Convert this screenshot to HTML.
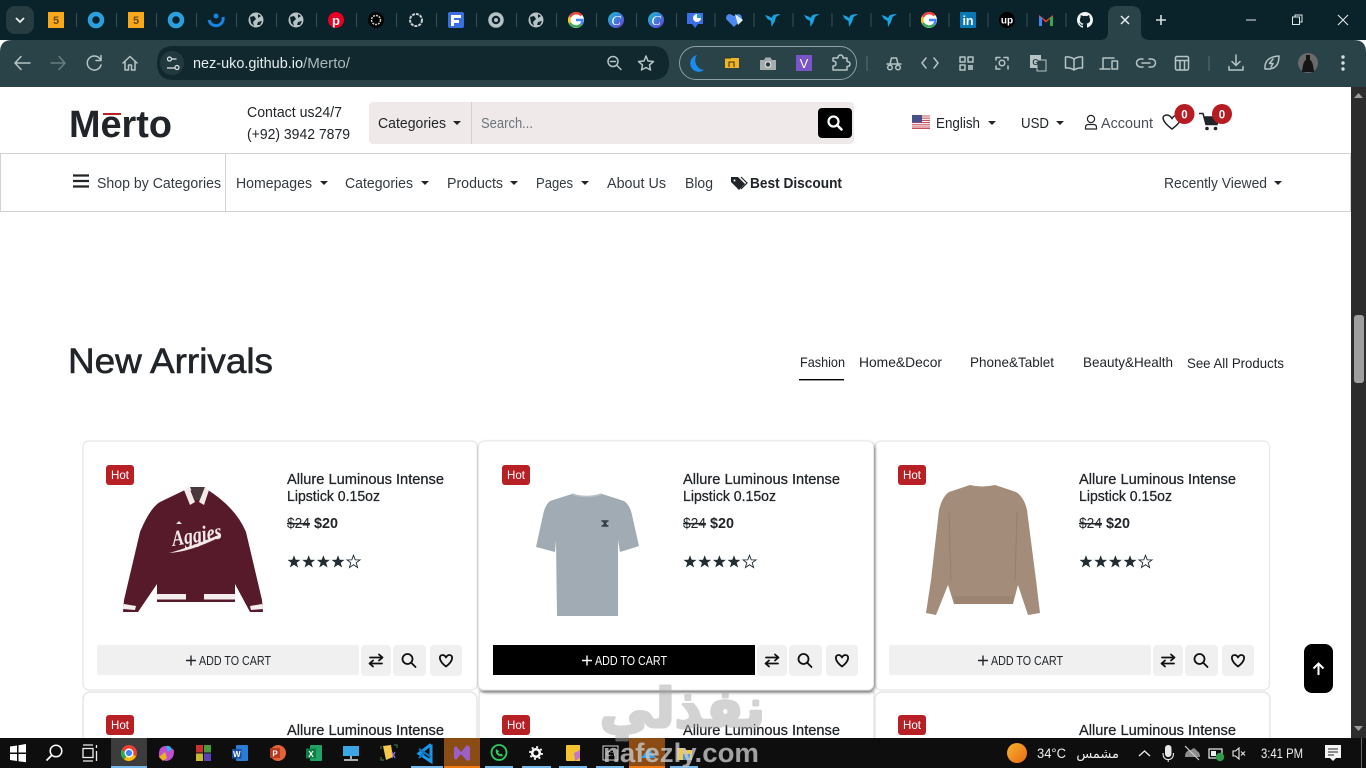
<!DOCTYPE html>
<html lang="en"><head><meta charset="utf-8"><title>Merto</title>
<style>
html,body{margin:0;padding:0;width:1366px;height:768px;overflow:hidden;background:#fff}
svg{display:block;font-family:"Liberation Sans","DejaVu Sans",sans-serif}
.s{fill:none;stroke:#b6c4c4;stroke-width:1.5;stroke-linecap:round;stroke-linejoin:round}
.d{fill:#212529;font-size:15px}
.m{fill:#212529;font-size:14.5px;stroke:#212529;stroke-width:.25}
.b{fill:#212529;font-size:15px;font-weight:bold}
.h{fill:#fff;font-size:12px;text-anchor:middle}
.i{fill:none;stroke:#111;stroke-width:1.8;stroke-linecap:round;stroke-linejoin:round}
.star{fill:#212d33}
</style></head><body>
<svg width="1366" height="768" viewBox="0 0 1366 768" xmlns="http://www.w3.org/2000/svg">
<defs>
<filter id="sh" x="-5%" y="-5%" width="110%" height="112%"><feDropShadow dx="1" dy="2" stdDeviation="1.600" flood-color="#000" flood-opacity=".5"/></filter>
<linearGradient id="wx" x1="0" y1="0" x2="1" y2="1"><stop offset="0" stop-color="#f8b32c"/><stop offset="1" stop-color="#ea6a12"/></linearGradient>
<linearGradient id="cv" x1="0" y1="0" x2="1" y2="1"><stop offset="0" stop-color="#18c1d6"/><stop offset="1" stop-color="#6a3ad6"/></linearGradient>
<g id="globe"><circle r="7.500" fill="#b6c2c4"/><path d="M-6 -3 L-2 -4 L0 -1 L-3 2 L-2 6 L-5 3Z M2 -6 L5 -4 L2 -2Z M2 2 L6 1 L4 5 L1 5Z" fill="#0b2329"/></g>
<g id="bird"><path d="M-7.500 -5 Q-3 -4 -1 -2 L1 -5 Q4 -6 8 -6 L3.500 -3 L2 2 L-1 7 L-1.500 1 L-5 -1Z" fill="#1ba3e0"/></g>
<g id="cva"><circle r="8" fill="url(#cv)"/><text x="0" y="5" text-anchor="middle" font-size="14" font-style="italic" font-family="Liberation Serif" fill="#fff">C</text></g>
<g id="goo"><circle r="8" fill="#fff"/><path d="M5.500 -4.500 A7 7 0 0 0 -6 -3" fill="none" stroke="#ea4335" stroke-width="2.400"/><path d="M-6 -3 A7 7 0 0 0 -6 3" fill="none" stroke="#fbbc05" stroke-width="2.400"/><path d="M-6 3 A7 7 0 0 0 5 4.500" fill="none" stroke="#34a853" stroke-width="2.400"/><path d="M5 4.500 A7 7 0 0 0 6.500 0 L0 0" fill="none" stroke="#4285f4" stroke-width="2.400"/></g>
<g id="swap"><path class="i" d="M-6 -3 H6 M3 -6 L6.500 -3 L3 0 M6 3 H-6 M-3 0 L-6.500 3 L-3 6" stroke-width="2"/></g>
<g id="mag"><circle cx="-1.500" cy="-1.500" r="5" class="i" stroke-width="2"/><path class="i" d="M2.500 2.500 L6.500 6.500" stroke-width="2.200"/></g>
<g id="hrt"><path class="i" d="M0 6 C-8 0 -7 -5.500 -3.500 -5.500 C-1.500 -5.500 -.5 -4 0 -3 C.5 -4 1.500 -5.500 3.500 -5.500 C7 -5.500 8 0 0 6Z" stroke-width="1.500"/></g>
<g id="st"><path class="star" d="M0 -6.800 L1.700 -2.200 L6.500 -2.100 L2.700 .8 L4.100 5.500 L0 2.700 L-4.100 5.500 L-2.700 .8 L-6.500 -2.100 L-1.700 -2.200Z"/></g>
<g id="stars"><use href="#st" x="294"/><use href="#st" x="308.700"/><use href="#st" x="323.400"/><use href="#st" x="338"/><path transform="translate(353.500,0)" fill="none" stroke="#212d33" stroke-width=".9" d="M0 -6.800 L1.700 -2.200 L6.500 -2.100 L2.700 .8 L4.100 5.500 L0 2.700 L-4.100 5.500 L-2.700 .8 L-6.500 -2.100 L-1.700 -2.200Z"/></g>
</defs>

<!-- page -->
<rect width="1366" height="768" fill="#fff"/>

<!-- cards row 2 -->
<path d="M83 740 V700 Q83 692 91 692 H469 Q477 692 477 700 V740" fill="#fff" stroke="#e6e6e6" stroke-width="1.500"/>
<path d="M479 740 V692 H874 V740" fill="#fff" stroke="#e6e6e6" stroke-width="1.500"/>
<path d="M875 740 V700 Q875 692 883 692 H1262 Q1270 692 1270 700 V740" fill="#fff" stroke="#e6e6e6" stroke-width="1.500"/>

<!-- card 1 -->
<rect x="83" y="441" width="394.500" height="249" rx="6" fill="#fff" stroke="#e6e6e6" stroke-width="1.200"/>
<!-- card 3 -->
<rect x="875" y="441" width="394.500" height="249" rx="6" fill="#fff" stroke="#e6e6e6" stroke-width="1.200"/>
<!-- card 2 hover -->
<rect x="478.500" y="441" width="395" height="249" rx="6" fill="#fff" stroke="#e8e8e8" stroke-width="1" filter="url(#sh)"/>

<!-- product: jacket -->
<path d="M187 489 L160 502 Q150 508 140 532 L124 600 L123 612 L138 612 L157 584 L157 602 L235 602 L235 584 L250 612 L263 612 L262 600 L246 532 Q236 508 208 490 Q197 494 187 489Z" fill="#571a2b"/>
<path d="M190 487 H205 L200 500 H195Z" fill="#4a3a40"/>
<path d="M184 490 L189 487 L195 502 L190 505Z M209 490 L205 487 L199 502 L204 505Z" fill="#f3e9e9"/>
<rect x="157" y="594" width="29" height="5.500" fill="#f6eeee"/><rect x="204" y="594" width="31" height="5.500" fill="#f6eeee"/>
<path d="M124 604 L136 606 L135 610 L123 609Z M250 606 L262 604 L263 609 L251 610Z" fill="#f6eeee"/>
<text x="173" y="546" font-family="Liberation Serif" font-size="22" font-style="italic" font-weight="bold" fill="#f3e8ea" transform="rotate(-9 173 546)" textLength="50" lengthAdjust="spacingAndGlyphs">Aggies</text>
<path d="M169 553 Q188 548 221 534 L220 537 Q190 552 169 553Z" fill="#f3e8ea"/>
<path d="M176 524 L179 521 L182 524Z" fill="#e8dcdc"/>

<!-- product: t-shirt -->
<path d="M572 494 Q586 499 602 494 L624 501 Q630 505 632 515 L639 546 L620 552 L618 540 L618 616 L557 616 L556 540 L555 552 L536 547 L543 515 Q545 505 550 501Z" fill="#a0abb3"/>
<path d="M572 494 Q586 499 602 494" fill="none" stroke="#b8c0c7" stroke-width="1.500"/>
<path d="M601.500 521 L608.500 521 M601.500 526 L608.500 526 M603 521 L607 526 M607 521 L603 526" stroke="#333b42" stroke-width="1.500"/>

<!-- product: sweater -->
<path d="M970 485 Q982 488 995 485 L1016 492 Q1024 497 1027 510 L1036 580 L1040 613 L1028 615 L1018 585 L1013 604 L954 604 L948 585 L936 615 L926 613 L931 580 L939 510 Q942 497 949 492Z" fill="#a38c79"/>
<path d="M949 512 L951 580 M1017 512 L1015 580" stroke="#94806e" stroke-width="1" fill="none"/>
<rect x="954" y="596" width="59" height="8" fill="#9b8572"/>

<!-- hot badges -->
<rect x="106" y="465" width="28" height="20" rx="3" fill="#b72126"/><text class="h" x="120" y="479" textLength="18" lengthAdjust="spacingAndGlyphs">Hot</text>
<rect x="502" y="465" width="28" height="20" rx="3" fill="#b72126"/><text class="h" x="516" y="479" textLength="18" lengthAdjust="spacingAndGlyphs">Hot</text>
<rect x="898" y="465" width="28" height="20" rx="3" fill="#b72126"/><text class="h" x="912" y="479" textLength="18" lengthAdjust="spacingAndGlyphs">Hot</text>
<rect x="106" y="715" width="28" height="20" rx="3" fill="#b72126"/><text class="h" x="120" y="729" textLength="18" lengthAdjust="spacingAndGlyphs">Hot</text>
<rect x="502" y="715" width="28" height="20" rx="3" fill="#b72126"/><text class="h" x="516" y="729" textLength="18" lengthAdjust="spacingAndGlyphs">Hot</text>
<rect x="898" y="715" width="28" height="20" rx="3" fill="#b72126"/><text class="h" x="912" y="729" textLength="18" lengthAdjust="spacingAndGlyphs">Hot</text>

<!-- card text 1 -->
<text class="m" x="287" y="484" textLength="157" lengthAdjust="spacingAndGlyphs">Allure Luminous Intense</text>
<text class="m" x="287" y="501" textLength="93" lengthAdjust="spacingAndGlyphs">Lipstick 0.15oz</text>
<text class="d" x="287" y="528" font-size="14" textLength="23" lengthAdjust="spacingAndGlyphs" text-decoration="line-through">$24</text>
<text class="b" x="314" y="528" textLength="24" lengthAdjust="spacingAndGlyphs">$20</text>
<use href="#stars" y="562"/>
<!-- card text 2 -->
<text class="m" x="683" y="484" textLength="157" lengthAdjust="spacingAndGlyphs">Allure Luminous Intense</text>
<text class="m" x="683" y="501" textLength="93" lengthAdjust="spacingAndGlyphs">Lipstick 0.15oz</text>
<text class="d" x="683" y="528" font-size="14" textLength="23" lengthAdjust="spacingAndGlyphs" text-decoration="line-through">$24</text>
<text class="b" x="710" y="528" textLength="24" lengthAdjust="spacingAndGlyphs">$20</text>
<use href="#stars" x="396" y="562"/>
<!-- card text 3 -->
<text class="m" x="1079" y="484" textLength="157" lengthAdjust="spacingAndGlyphs">Allure Luminous Intense</text>
<text class="m" x="1079" y="501" textLength="93" lengthAdjust="spacingAndGlyphs">Lipstick 0.15oz</text>
<text class="d" x="1079" y="528" font-size="14" textLength="23" lengthAdjust="spacingAndGlyphs" text-decoration="line-through">$24</text>
<text class="b" x="1106" y="528" textLength="24" lengthAdjust="spacingAndGlyphs">$20</text>
<use href="#stars" x="792" y="562"/>
<!-- row 2 titles -->
<text class="m" x="287" y="735" textLength="157" lengthAdjust="spacingAndGlyphs">Allure Luminous Intense</text>
<text class="m" x="683" y="735" textLength="157" lengthAdjust="spacingAndGlyphs">Allure Luminous Intense</text>
<text class="m" x="1079" y="735" textLength="157" lengthAdjust="spacingAndGlyphs">Allure Luminous Intense</text>

<!-- buttons card 1 -->
<rect x="97" y="645" width="262" height="30" rx="2" fill="#f0f0f0"/>
<path d="M186 660.500 H196 M191 655.500 V665.500" stroke="#212529" stroke-width="1.400"/>
<text x="199" y="665" font-size="13" fill="#212529" textLength="72" lengthAdjust="spacingAndGlyphs">ADD TO CART</text>
<rect x="361" y="645" width="30" height="31" rx="4" fill="#f0f0f0"/><rect x="393" y="645" width="33" height="31" rx="4" fill="#f0f0f0"/><rect x="430" y="645" width="32" height="31" rx="4" fill="#f0f0f0"/>
<use href="#swap" x="376" y="660.500"/><use href="#mag" x="409" y="660.500"/><use href="#hrt" x="446" y="660.500"/>
<!-- buttons card 2 -->
<rect x="493" y="645" width="262" height="30" fill="#000"/>
<path d="M582 660.500 H592 M587 655.500 V665.500" stroke="#fff" stroke-width="1.400"/>
<text x="595" y="665" font-size="13" fill="#fff" textLength="72" lengthAdjust="spacingAndGlyphs">ADD TO CART</text>
<rect x="757" y="645" width="30" height="31" rx="4" fill="#f0f0f0"/><rect x="789" y="645" width="33" height="31" rx="4" fill="#f0f0f0"/><rect x="826" y="645" width="32" height="31" rx="4" fill="#f0f0f0"/>
<use href="#swap" x="772" y="660.500"/><use href="#mag" x="805" y="660.500"/><use href="#hrt" x="842" y="660.500"/>
<!-- buttons card 3 -->
<rect x="889" y="645" width="262" height="30" rx="2" fill="#f0f0f0"/>
<path d="M978 660.500 H988 M983 655.500 V665.500" stroke="#212529" stroke-width="1.400"/>
<text x="991" y="665" font-size="13" fill="#212529" textLength="72" lengthAdjust="spacingAndGlyphs">ADD TO CART</text>
<rect x="1153" y="645" width="30" height="31" rx="4" fill="#f0f0f0"/><rect x="1185" y="645" width="33" height="31" rx="4" fill="#f0f0f0"/><rect x="1222" y="645" width="32" height="31" rx="4" fill="#f0f0f0"/>
<use href="#swap" x="1168" y="660.500"/><use href="#mag" x="1201" y="660.500"/><use href="#hrt" x="1238" y="660.500"/>

<!-- heading -->
<text x="68" y="373" font-size="35" fill="#212529" stroke="#212529" stroke-width=".6" textLength="205" lengthAdjust="spacingAndGlyphs">New Arrivals</text>
<text x="800" y="367" font-size="14" fill="#212529" textLength="45" lengthAdjust="spacingAndGlyphs">Fashion</text>
<rect x="799" y="379" width="45" height="1.400" fill="#000"/>
<text x="859" y="367" font-size="14" fill="#212529" textLength="83" lengthAdjust="spacingAndGlyphs">Home&amp;Decor</text>
<text x="970" y="367" font-size="14" fill="#212529" textLength="84" lengthAdjust="spacingAndGlyphs">Phone&amp;Tablet</text>
<text x="1083" y="367" font-size="14" fill="#212529" textLength="90" lengthAdjust="spacingAndGlyphs">Beauty&amp;Health</text>
<text x="1187" y="368" font-size="14" fill="#212529" textLength="97" lengthAdjust="spacingAndGlyphs">See All Products</text>

<!-- back to top -->
<rect x="1304" y="644" width="29" height="49" rx="8" fill="#000"/>
<path d="M1318.500 675 V664 M1313.500 668.500 L1318.500 663.500 L1323.500 668.500" fill="none" stroke="#fff" stroke-width="2"/>

<!-- header -->
<rect x="0" y="87" width="1351" height="125" fill="#fff"/>
<text x="69" y="137" font-size="38" font-weight="bold" fill="#212529" textLength="103" lengthAdjust="spacingAndGlyphs">Merto</text>
<rect x="103" y="113" width="18" height="2" fill="#b72126"/>
<text class="d" x="247" y="117" font-size="14.500" textLength="95" lengthAdjust="spacingAndGlyphs">Contact us24/7</text>
<text class="d" x="247" y="139" font-size="14.500" textLength="103" lengthAdjust="spacingAndGlyphs">(+92) 3942 7879</text>
<rect x="369" y="102" width="485" height="42" rx="4" fill="#f0e9e9"/>
<rect x="471" y="102" width="1" height="42" fill="#d5d0d0"/>
<text class="d" x="378" y="128" font-size="14.500" textLength="68" lengthAdjust="spacingAndGlyphs">Categories</text>
<path d="M453 121 H461 L457 125Z" fill="#212529"/>
<text x="481" y="128" font-size="14.500" fill="#6c757d" textLength="52" lengthAdjust="spacingAndGlyphs">Search...</text>
<rect x="818" y="108" width="34" height="30" rx="4" fill="#000"/>
<circle cx="833.500" cy="121.500" r="5" fill="none" stroke="#fff" stroke-width="2.200"/><path d="M837 125 L841.500 129.500" stroke="#fff" stroke-width="2.500" stroke-linecap="round"/>

<!-- flag -->
<rect x="912" y="115" width="18" height="14" fill="#fff"/>
<path d="M912 116 H930 M912 118.200 H930 M912 120.400 H930 M912 122.600 H930 M912 124.800 H930 M912 127 H930 M912 128.500 H930" stroke="#c9505a" stroke-width="1.100"/>
<rect x="912" y="115" width="10" height="7.500" fill="#47508a"/>
<text class="d" x="936" y="128" font-size="14.500" textLength="44" lengthAdjust="spacingAndGlyphs">English</text>
<path d="M988 121 H996 L992 125Z" fill="#212529"/>
<text class="d" x="1021" y="128" font-size="14.500" textLength="28" lengthAdjust="spacingAndGlyphs">USD</text>
<path d="M1056 121 H1064 L1060 125Z" fill="#212529"/>
<circle cx="1091" cy="119" r="3.600" fill="none" stroke="#212529" stroke-width="1.200"/>
<path d="M1085.500 129 V127.500 Q1085.500 124.500 1088.500 124.500 H1093.500 Q1096.500 124.500 1096.500 127.500 V129Z" fill="none" stroke="#212529" stroke-width="1.200"/>
<text x="1101" y="128" font-size="14.500" fill="#495057" textLength="52" lengthAdjust="spacingAndGlyphs">Account</text>
<path d="M1172 129 C1160 120 1162 115 1167 115 C1169.500 115 1171 117 1172 118.500 C1173 117 1174.500 115 1177 115 C1182 115 1184 120 1172 129Z" fill="none" stroke="#212529" stroke-width="1.500"/>
<circle cx="1184.500" cy="114" r="10" fill="#b71c24"/>
<text x="1184.500" y="118.500" font-size="11.500" font-weight="bold" fill="#fff" text-anchor="middle">0</text>
<path d="M1199 113.500 H1203 L1206 124.500 H1217 L1219 117 H1204.500" fill="none" stroke="#212529" stroke-width="1.500"/><path d="M1204 117 H1219 L1217 125 H1206Z" fill="#212529"/><circle cx="1207" cy="128.500" r="1.800" fill="#212529"/><circle cx="1215.500" cy="128.500" r="1.800" fill="#212529"/>
<circle cx="1222" cy="114" r="10" fill="#b71c24"/>
<text x="1222" y="118.500" font-size="11.500" font-weight="bold" fill="#fff" text-anchor="middle">0</text>

<!-- nav -->
<rect x="0" y="153" width="1351" height="1" fill="#d2d2d2"/>
<rect x="0" y="211" width="1351" height="1" fill="#d2d2d2"/>
<rect x="0" y="153" width="1" height="59" fill="#d2d2d2"/>
<rect x="225" y="153" width="1" height="59" fill="#d2d2d2"/>
<rect x="1350" y="153" width="1" height="59" fill="#d2d2d2"/>
<path d="M73 175.500 H89 M73 181 H89 M73 186.500 H89" stroke="#212529" stroke-width="2.200"/>
<text x="97" y="188" font-size="14.500" fill="#343a40" textLength="124" lengthAdjust="spacingAndGlyphs">Shop by Categories</text>
<text x="236" y="188" font-size="14.500" fill="#343a40" textLength="76" lengthAdjust="spacingAndGlyphs">Homepages</text><path d="M320 181 H328 L324 185Z" fill="#212529"/>
<text x="345" y="188" font-size="14.500" fill="#343a40" textLength="68" lengthAdjust="spacingAndGlyphs">Categories</text><path d="M421 181 H429 L425 185Z" fill="#212529"/>
<text x="447" y="188" font-size="14.500" fill="#343a40" textLength="56" lengthAdjust="spacingAndGlyphs">Products</text><path d="M510 181 H518 L514 185Z" fill="#212529"/>
<text x="536" y="188" font-size="14.500" fill="#343a40" textLength="37" lengthAdjust="spacingAndGlyphs">Pages</text><path d="M581 181 H589 L585 185Z" fill="#212529"/>
<text x="607" y="188" font-size="14.500" fill="#343a40" textLength="59" lengthAdjust="spacingAndGlyphs">About Us</text>
<text x="685" y="188" font-size="14.500" fill="#343a40" textLength="28" lengthAdjust="spacingAndGlyphs">Blog</text>
<path d="M731 177 H738 L745 184 L739 190 L731 182Z" fill="#212529"/><path d="M741 177 L747 183 L741 189" fill="none" stroke="#212529" stroke-width="1.200"/><circle cx="734.500" cy="180.500" r="1" fill="#fff"/>
<text x="750" y="188" font-size="14.500" font-weight="bold" fill="#212529" textLength="92" lengthAdjust="spacingAndGlyphs">Best Discount</text>
<text x="1164" y="188" font-size="14.500" fill="#343a40" textLength="103" lengthAdjust="spacingAndGlyphs">Recently Viewed</text><path d="M1274 181 H1282 L1278 185Z" fill="#212529"/>

<!-- scrollbar -->
<rect x="1351" y="87" width="15" height="651" fill="#2c2c2c"/>
<path d="M1354 98 L1358.500 93 L1363 98Z" fill="#9c9c9c"/>
<path d="M1354 726 L1358.500 731 L1363 726Z" fill="#9c9c9c"/>
<rect x="1354" y="315" width="10" height="68" rx="3" fill="#9f9f9f"/>

<!-- chrome tab strip -->
<rect x="0" y="0" width="1366" height="40" fill="#0a2229"/>
<rect x="6" y="6" width="28" height="28" rx="9" fill="#263c41"/>
<path d="M16 18 L20 22 L24 18" fill="none" stroke="#e6eeee" stroke-width="1.800"/>
<g stroke="#33494f" stroke-width="1.200">
<path d="M76.500 13 V27 M116.500 13 V27 M156.500 13 V27 M196.500 13 V27 M236.500 13 V27 M276.500 13 V27 M316.500 13 V27 M356.500 13 V27 M396.500 13 V27 M436.500 13 V27 M476.500 13 V27 M516.500 13 V27 M556.500 13 V27 M596.500 13 V27 M636.500 13 V27 M676.500 13 V27 M715 13 V27 M754 13 V27 M793 13 V27 M832 13 V27 M871 13 V27 M910 13 V27 M949 13 V27 M988 13 V27 M1027 13 V27 M1066 13 V27"/></g>
<rect x="48" y="12" width="16" height="16" fill="#f5a81c"/><text x="56" y="24" font-size="11" font-weight="bold" fill="#6b4a08" text-anchor="middle">5</text>
<circle cx="96" cy="20" r="6" fill="#0a2229" stroke="#2ba0dc" stroke-width="4.500"/>
<rect x="128" y="12" width="16" height="16" fill="#f5a81c"/><text x="136" y="24" font-size="11" font-weight="bold" fill="#6b4a08" text-anchor="middle">5</text>
<circle cx="176" cy="20" r="6" fill="#0a2229" stroke="#2ba0dc" stroke-width="4.500"/>
<path d="M209 20 A7 7 0 0 0 223 17" fill="none" stroke="#1a84e0" stroke-width="3"/><circle cx="216" cy="16" r="2.500" fill="#1a84e0"/>
<use href="#globe" x="256" y="20"/><use href="#globe" x="296" y="20"/>
<circle cx="336" cy="20" r="8" fill="#e60023"/><text x="336" y="25" font-size="13" font-weight="bold" fill="#fff" text-anchor="middle">p</text>
<circle cx="376" cy="20" r="8" fill="#000"/><circle cx="376" cy="20" r="4.500" fill="none" stroke="#ccc" stroke-width="1.500" stroke-dasharray="2 1"/>
<circle cx="416" cy="20" r="6" fill="none" stroke="#c9d3d3" stroke-width="2" stroke-dasharray="3 1"/>
<rect x="448" y="12" width="16" height="16" rx="2" fill="#3a6fe0"/><path d="M451 15 H461 V18 H454 V20 H459 V23 H454 V26 H451Z" fill="#fff"/>
<circle cx="496" cy="20" r="6" fill="none" stroke="#b6c2c4" stroke-width="3.500"/><circle cx="496" cy="20" r="2" fill="#b6c2c4"/>
<use href="#globe" x="536" y="20"/><use href="#goo" x="576" y="20"/>
<use href="#cva" x="616" y="20"/><use href="#cva" x="656" y="20"/>
<path d="M687 13 H703 V24 H698 L695 28 L692 24 H687Z" fill="#3a6fe8"/><circle cx="697" cy="18" r="4" fill="#fff"/><path d="M697 18 V14 A4 4 0 0 1 701 18Z" fill="#1ba3c0"/>
<path d="M734 27 L726 19 Q726 14 730 14 L734 16 L738 14 Q742 14 742 19Z" fill="#4a8af0"/><path d="M735 14 L743 20 L738 25 Z" fill="#e6eeff"/>
<use href="#bird" x="772.500" y="20"/><use href="#bird" x="811.500" y="20"/><use href="#bird" x="850" y="20"/><use href="#bird" x="889" y="20"/>
<use href="#goo" x="929" y="20"/>
<rect x="960" y="12" width="16" height="16" rx="1" fill="#0a78b5"/><text x="968" y="25" font-size="12.500" font-weight="bold" fill="#fff" text-anchor="middle">in</text>
<circle cx="1007" cy="20" r="8" fill="#000"/><text x="1007" y="23.500" font-size="10" fill="#fff" text-anchor="middle" font-weight="bold">up</text>
<path d="M1039 26 V15 L1046 20.500 L1053 15 V26 H1050 V19 L1046 22.500 L1042 19 V26Z" fill="#ea4335"/><rect x="1039" y="17" width="3" height="9" fill="#4285f4"/><rect x="1050" y="17" width="3" height="9" fill="#34a853"/>
<path transform="translate(1077,12)" fill="#f2f5f5" d="M8 0C3.58 0 0 3.58 0 8c0 3.54 2.29 6.53 5.47 7.59.4.07.55-.17.55-.38 0-.19-.01-.82-.01-1.49-2.01.37-2.53-.49-2.69-.94-.09-.23-.48-.94-.82-1.13-.28-.15-.68-.52-.01-.53.63-.01 1.08.58 1.23.82.72 1.21 1.87.87 2.33.66.07-.52.28-.87.51-1.07-1.78-.2-3.64-.89-3.64-3.95 0-.87.31-1.59.82-2.15-.08-.2-.36-1.02.08-2.12 0 0 .67-.21 2.2.82.64-.18 1.32-.27 2-.27.68 0 1.36.09 2 .27 1.53-1.04 2.2-.82 2.2-.82.44 1.1.16 1.92.08 2.12.51.56.82 1.27.82 2.15 0 3.07-1.87 3.75-3.65 3.95.29.25.54.73.54 1.48 0 1.07-.01 1.93-.01 2.2 0 .21.15.46.55.38A8.013 8.013 0 0016 8c0-4.42-3.58-8-8-8z"/>
<!-- active tab -->
<path d="M1100 40 Q1108 40 1108 32 V15 Q1108 6 1117 6 H1131 Q1141 6 1141 15 V32 Q1141 40 1150 40Z" fill="#2a4348"/>
<path d="M1121 16 L1129 24 M1129 16 L1121 24" stroke="#e6eeee" stroke-width="1.500"/>
<path d="M1161 15 V25 M1156 20 H1166" stroke="#d6e0e0" stroke-width="1.600"/>
<path d="M1246 20 H1256" stroke="#e0e8e8" stroke-width="1"/>
<rect x="1292.500" y="17" width="7" height="7.500" fill="none" stroke="#e0e8e8" stroke-width="1"/><path d="M1295 17 V15 H1302 V22 H1299.500" fill="none" stroke="#e0e8e8" stroke-width="1"/>
<path d="M1338 15 L1348 25 M1348 15 L1338 25" stroke="#e0e8e8" stroke-width="1.100"/>

<!-- toolbar -->
<path d="M0 87 V52 Q0 40 12 40 H1354 Q1366 40 1366 52 V87Z" fill="#2a4348"/>
<path d="M30 63 H15 M21 56.500 L15 63 L21 69.500" class="s"/>
<path d="M51 63 H65 M59 56.500 L65 63 L59 69.500" class="s" opacity=".45"/>
<path d="M100 59 A7 7 0 1 0 101 65 M101 55.500 V60.500 H96" class="s"/>
<path d="M123 63 L130 56.500 L137 63 M125 61.500 V70 H128.500 V65 H131.500 V70 H135 V61.500" class="s"/>
<path d="M173 46 H652 Q669 46 669 63 Q669 80 652 80 H173 Q157 80 157 63 Q157 46 173 46Z" fill="#10282e"/>
<circle cx="172" cy="63" r="12" fill="#223a3f"/>
<path d="M168 59 H176.500 M175 68 H167" stroke="#dde6e6" stroke-width="1.300"/><circle cx="169.500" cy="59" r="2" fill="#223a3f" stroke="#dde6e6" stroke-width="1.200"/><circle cx="177" cy="67.500" r="2" fill="#223a3f" stroke="#dde6e6" stroke-width="1.200"/>
<text x="193" y="68" font-size="14.500" fill="#e8eeee" textLength="110" lengthAdjust="spacingAndGlyphs">nez-uko.github.io</text>
<text x="303" y="68" font-size="14.500" fill="#aab8b8" textLength="47" lengthAdjust="spacingAndGlyphs">/Merto/</text>
<circle cx="613" cy="61.500" r="5" class="s" stroke-width="1.400"/><path d="M610.500 61.500 H615.500 M617 65.500 L621 69.500" class="s" stroke-width="1.400"/>
<path d="M646 56 L648 61 L653.500 61.500 L649.500 65 L650.500 70 L646 67.500 L641.500 70 L642.500 65 L638.500 61.500 L644 61Z" class="s" stroke-width="1.400"/>
<rect x="679.500" y="46.500" width="177" height="33" rx="16.500" fill="none" stroke="#8ea0a3" stroke-width="1"/>
<path d="M697 55 A8.500 8.500 0 1 0 704 70 A9.500 9.500 0 0 1 697 55Z" fill="#1a8cf0"/>
<rect x="725" y="58" width="14" height="10" fill="#f0b429"/><path d="M725 58 H731 M729 67 V62 H734 V67" stroke="#3a2c0a" stroke-width="1" fill="none"/>
<path d="M760 60 H764 L765.500 57.500 H770.500 L772 60 H776 V70 H760Z" fill="#a5adae"/><circle cx="768" cy="64.500" r="2.800" fill="#2a4348" stroke="#eee" stroke-width="1"/>
<rect x="796" y="55" width="16" height="16" fill="#7a55c8"/><text x="804" y="68" font-size="13" fill="#fff" text-anchor="middle">V</text>
<path d="M833 58 H838 Q838 55 840.500 55 Q843 55 843 58 H847 V61.500 Q850 61.500 850 64 Q850 66.500 847 66.500 V70 H833 V66 Q836 66 836 63.500 Q836 61 833 61Z" class="s" stroke-width="1.400"/>
<path d="M867 56 V71" stroke="#5a6e72" stroke-width="1"/>
<path d="M887 64 H901 M890 64 L891.500 58 H896.500 L898 64" class="s" stroke-width="1.400"/><circle cx="890" cy="67.500" r="2.300" class="s" stroke-width="1.200"/><circle cx="898" cy="67.500" r="2.300" class="s" stroke-width="1.200"/>
<path d="M926 58 L922 63 L926 68 M934 58 L938 63 L934 68" class="s"/>
<path d="M960 57 h5 v5 h-5Z M968 57 h5 v5 h-5Z M960 65 h5 v5 h-5Z" class="s" stroke-width="1.300"/><path d="M968 65 h5 v5 h-5Z" fill="#a0b0b0"/>
<path d="M996 60 V57.500 H1000 M1004 57.500 H1008 V60 M996 66 V69 H1000 M1008 66 V69" class="s"/><circle cx="1002" cy="63" r="2.800" class="s"/>
<rect x="1030" y="55" width="11" height="13" fill="#b7c4c4"/><rect x="1037" y="60" width="9" height="11" fill="#2a4348" stroke="#b7c4c4"/><text x="1035.500" y="65" font-size="8" fill="#2a4348" text-anchor="middle" font-weight="bold">G</text>
<path d="M1074 59 Q1070 56.500 1065.500 57 V68 Q1070 67.500 1074 70 Q1078 67.500 1082.500 68 V57 Q1078 56.500 1074 59Z M1074 59 V70" class="s" stroke-width="1.300"/>
<path d="M1103 68 V58 H1114 M1100 69 H1110" class="s" stroke-width="1.400"/><rect x="1112" y="61" width="5.500" height="8" class="s" stroke-width="1.400"/>
<path d="M1143 59 H1140.500 A3.800 3.800 0 0 0 1140.500 67 H1143 M1149 59 H1151.500 A3.800 3.800 0 0 1 1151.500 67 H1149 M1142 63 H1150" class="s" stroke-width="1.400"/>
<rect x="1175.500" y="56.500" width="13" height="13.500" rx="1.500" class="s" stroke-width="1.400"/><path d="M1175.500 60.500 H1188.500 M1180 60.500 V70 M1184.500 60.500 V70" class="s" stroke-width="1.300"/>
<path d="M1209 56 V71" stroke="#5a6e72" stroke-width="1"/>
<path d="M1236 55 V65 M1232 61.500 L1236 65.500 L1240 61.500 M1229 66.500 V70 H1243 V66.500" class="s" stroke-width="1.800"/>
<path d="M1265 69 Q1264 57 1279 56 Q1279 69 1268 69Z" class="s" stroke-width="1.300"/><path d="M1273 59 L1269.500 63.500 H1273 L1271 67" class="s" stroke-width="1.100"/>
<circle cx="1308" cy="63" r="10" fill="#6a6a6a"/><path d="M1302 72 Q1303 61 1306 60 L1306 55 H1310 V60 Q1313 61 1314 72Z" fill="#151515"/>
<circle cx="1343" cy="57" r="1.700" fill="#d4dede"/><circle cx="1343" cy="63" r="1.700" fill="#d4dede"/><circle cx="1343" cy="69" r="1.700" fill="#d4dede"/>

<!-- taskbar -->
<rect x="0" y="738" width="1366" height="30" fill="#0e0e0e"/>
<path d="M10 746.500 L17 745.500 V752.500 H10Z M18.500 745.200 L26 744 V752.500 H18.500Z M10 754 H17 V761 L10 760Z M18.500 754 H26 V762.200 L18.500 761.200Z" fill="#fff"/>
<circle cx="56" cy="751" r="5.800" fill="none" stroke="#fff" stroke-width="1.500"/><path d="M51.500 755.500 L46.500 760.500" stroke="#fff" stroke-width="1.800"/>
<path d="M83 745 H93 M83 761 H93" stroke="#eee" stroke-width="1.300"/><rect x="83" y="748.500" width="10" height="9" fill="none" stroke="#eee" stroke-width="1.300"/><path d="M96.500 745 V748 M96.500 751 V761" stroke="#eee" stroke-width="1.300"/>
<rect x="111" y="738" width="36" height="30" fill="#3c3c3c"/><rect x="111" y="766" width="36" height="2" fill="#76b9ed"/>
<circle cx="129" cy="753" r="8" fill="#e94235"/><path d="M129 753 L136 756 A8 8 0 0 1 124 759.500Z" fill="#fbbc05"/><path d="M129 753 L124 759.500 A8 8 0 0 1 121.500 750Z" fill="#34a853"/><circle cx="129" cy="753" r="3.800" fill="#4285f4" stroke="#fff" stroke-width="1.300"/>
<path d="M159 757 Q158 746 166 746 L168 749 Q173 747 174 751 Q174 761 165 761 L163 758Z" fill="#c050d0"/><path d="M166 746 Q170 745 172 749 L168 752 Z" fill="#30b0e8"/><path d="M159 757 L165 752 L167 758 L163 761Z" fill="#f0b020"/>
<rect x="196" y="745" width="7" height="7.500" fill="#c8332a"/><rect x="204" y="745" width="7" height="7.500" fill="#4a9a3a"/><rect x="196" y="753.500" width="7" height="7.500" fill="#c9b92f"/><rect x="204" y="753.500" width="7" height="7.500" fill="#5a42b8"/>
<rect x="236" y="745" width="12" height="16" rx="1" fill="#2b7cd3"/><rect x="232" y="749" width="9.500" height="9.500" fill="#1a4e9e"/><text x="236.800" y="757" font-size="8" font-weight="bold" fill="#fff" text-anchor="middle">W</text>
<circle cx="278" cy="753" r="8" fill="#e0633a"/><rect x="270" y="748" width="10" height="10" fill="#b53a1e"/><text x="275" y="756.500" font-size="8" font-weight="bold" fill="#fff" text-anchor="middle">P</text>
<rect x="310" y="745" width="12" height="16" rx="1" fill="#21a366"/><rect x="306" y="748.500" width="10" height="10" fill="#107c41"/><text x="311" y="757" font-size="8" font-weight="bold" fill="#fff" text-anchor="middle">X</text>
<rect x="343" y="746" width="16" height="10" fill="#3ba6e6"/><path d="M351 756 V759 M344 760 H358" stroke="#d8e4ec" stroke-width="1.500"/>
<path d="M383 746 L391 745 L393 757 L386 760Z" fill="#f3c94a"/><path d="M392 752 L395 758 M395 752 L392 758" stroke="#8a6ad0" stroke-width="1.300"/><path d="M381 746 V749 M381 757 V760 H384 M394 745 H397 V748" stroke="#4a8a50" stroke-width="1"/>
<path d="M431 744.500 V761.500 L419 753.500 L431 744.500" fill="none" stroke="#1a98e8" stroke-width="3"/><path d="M419 749 L431 757 M419 758 L424 753" stroke="#1078c8" stroke-width="2.200"/>
<rect x="411" y="766" width="32" height="2" fill="#76b9ed"/>
<rect x="444" y="738" width="36" height="30" fill="#8a4c14"/><rect x="444" y="766" width="36" height="2" fill="#f07a10"/>
<path d="M456 746 L461 752 L467 745 L470 747 V760 L467 761 L461 754 L456 760 L454 758 V748Z" fill="#9a60c8"/>
<circle cx="499" cy="752.500" r="7.500" fill="none" stroke="#2ecc62" stroke-width="1.800"/><path d="M496 749 Q495 753 497.500 755 Q500 757 503 756 L501.500 753.500 L500 754.500 L498 752.500 L499 751Z" fill="#2ecc62"/>
<circle cx="536" cy="753" r="3.800" fill="none" stroke="#fff" stroke-width="2.500"/><circle cx="536" cy="753" r="6" fill="none" stroke="#fff" stroke-width="1.800" stroke-dasharray="2 2.700"/>
<path d="M566 746 Q566 745 567 745 H580 V761 H567 Q566 761 566 760Z" fill="#f4c430"/><path d="M574 753 L580 750 V758 L575 761Z" fill="#c47ac0"/>
<rect x="603" y="746" width="15" height="14" fill="#000" stroke="#d8d8d8" stroke-width="1"/><text x="610.500" y="756" font-size="7" fill="#eee" text-anchor="middle">C:\</text>
<rect x="629" y="738" width="36" height="30" fill="#8a4c14"/><rect x="629" y="766" width="36" height="2" fill="#f07a10"/>
<path d="M641 758 L649 748 L656 758Z" fill="#36a0e8"/>
<path d="M677 748 H684 L686 750 H692 V760 H677Z" fill="#f2c94c"/><rect x="683" y="754" width="7" height="6" fill="#4a9ad8"/>
<rect x="485" y="766" width="28" height="2" fill="#76b9ed"/><rect x="522" y="766" width="29" height="2" fill="#76b9ed"/><rect x="559" y="766" width="28" height="2" fill="#76b9ed"/><rect x="596" y="766" width="28" height="2" fill="#76b9ed"/><rect x="670" y="766" width="28" height="2" fill="#76b9ed"/>

<circle cx="1017" cy="753" r="10" fill="url(#wx)"/>
<text x="1037" y="758" font-size="13.500" fill="#eee" textLength="29" lengthAdjust="spacingAndGlyphs">34°C</text>
<text x="1119" y="758" font-size="13" fill="#eee" font-family="DejaVu Sans,sans-serif" direction="rtl">مشمس</text>
<path d="M1139 756 L1144.500 751 L1150 756" fill="none" stroke="#eee" stroke-width="1.300"/>
<rect x="1165" y="745" width="6.500" height="12" rx="3.200" fill="#e8e8e8"/><path d="M1163 753 Q1163 759.500 1168.200 759.500 Q1173.500 759.500 1173.500 753 M1168.200 759.500 V762" fill="none" stroke="#e8e8e8" stroke-width="1.100"/>
<path d="M1185 757 Q1185 750 1191 750 Q1194 746 1197 751 Q1200 752 1200 757Z" fill="#8d8d8d"/><path d="M1185 746 L1199 760" stroke="#cfcfcf" stroke-width="1.200"/>
<rect x="1209" y="749" width="13" height="9" fill="none" stroke="#eee" stroke-width="1.200"/><rect x="1211" y="751" width="5" height="5" fill="#eee"/><circle cx="1220" cy="757" r="4.200" fill="#2e9a4a"/>
<path d="M1233 751 H1235.500 L1239 748 V759 L1235.500 756 H1233Z" fill="none" stroke="#eee" stroke-width="1.100"/><path d="M1241 751.500 L1245 755.500 M1245 751.500 L1241 755.500" stroke="#eee" stroke-width="1"/>
<text x="1261" y="758" font-size="13.500" fill="#eee" textLength="42" lengthAdjust="spacingAndGlyphs">3:41 PM</text>
<path d="M1325 745 H1341 V758 H1336 L1333 761 L1330 758 H1325Z" fill="#f4f4f4"/><path d="M1328 749 H1338 M1328 752 H1338 M1328 755 H1334" stroke="#222" stroke-width="1"/>
<rect x="1361" y="738" width="1" height="30" fill="#666"/>

<!-- watermark -->
<text x="765" y="727" font-size="54" font-weight="bold" fill="#a8a8a8" stroke="#a8a8a8" stroke-width="3" stroke-linejoin="round" opacity=".5" font-family="DejaVu Sans,sans-serif" direction="rtl">نفذلي</text>
<text x="603" y="762" font-size="27" font-weight="bold" fill="#c8c8c8" opacity=".8" textLength="156" lengthAdjust="spacingAndGlyphs">nafezly.com</text>
</svg>
</body></html>
